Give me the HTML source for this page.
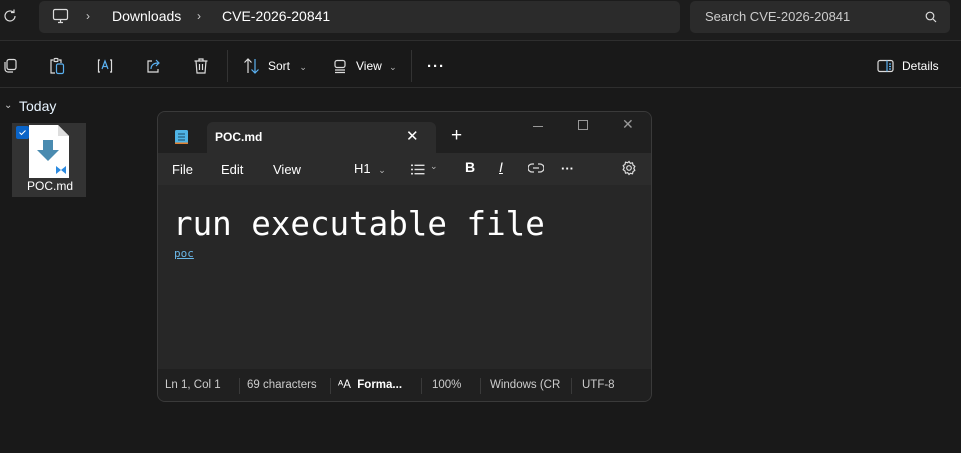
<!DOCTYPE html>
<html><head><style>
*{margin:0;padding:0;box-sizing:border-box}
body{width:961px;height:453px;background:#191919;font-family:"Segoe UI","Liberation Sans",sans-serif;color:#fff;position:relative;overflow:hidden;font-size:13px}
.a{position:absolute}
svg{position:absolute}
</style></head><body>
<div class="a" style="left:0;top:0;width:961px;height:41px;background:#1c1c1c;border-bottom:1px solid #2e2e2e"></div>
<svg style="left:2px;top:8px" width="16" height="16" viewBox="0 0 16 16" fill="none" stroke="#ddd" stroke-width="1.2"><path d="M13 8a5 5 0 1 1-1.6-3.7M12 1.5v3h-3"/></svg>
<div class="a" style="left:39px;top:1px;width:641px;height:32px;background:#2b2b2b;border-radius:5px"></div>
<svg style="left:52px;top:8px" width="17" height="16" viewBox="0 0 17 16" fill="none" stroke="#ddd" stroke-width="1.2"><rect x="1.5" y="1.5" width="14" height="10" rx="1.5"/><path d="M6 14.5h5M8.5 11.5v3"/></svg>
<div class="a" style="left:86px;top:9px;color:#ccc;font-size:12px">›</div>
<div class="a" style="left:112px;top:8px;font-size:14px">Downloads</div>
<div class="a" style="left:197px;top:9px;color:#ccc;font-size:12px">›</div>
<div class="a" style="left:222px;top:8px;font-size:14px">CVE-2026-20841</div>
<div class="a" style="left:690px;top:1px;width:260px;height:32px;background:#2b2b2b;border-radius:5px"></div>
<div class="a" style="left:705px;top:9px;color:#ccc;font-size:13px">Search CVE-2026-20841</div>
<svg style="left:925px;top:11px" width="12" height="12" viewBox="0 0 12 12" fill="none" stroke="#ddd" stroke-width="1.2"><circle cx="5" cy="5" r="3.8"/><path d="M8 8l3 3"/></svg>

<div class="a" style="left:0;top:42px;width:961px;height:46px;background:#191919;border-bottom:1px solid #2e2e2e"></div>
<svg style="left:2px;top:58px" width="16" height="16" viewBox="0 0 16 16" fill="none" stroke="#ddd" stroke-width="1.2"><rect x="5" y="1.5" width="9" height="10" rx="2"/><path d="M3 4v7a3 3 0 0 0 3 3h5"/></svg>
<svg style="left:48px;top:57px" width="17" height="18" viewBox="0 0 17 18" fill="none" stroke="#ddd" stroke-width="1.2"><path d="M5 3H3v13h4"/><rect x="6" y="1.5" width="4" height="3" rx="1"/><path d="M11 3h2v3"/><rect x="8.5" y="7" width="7" height="9.5" rx="1.5" stroke="#5ab0f0"/></svg>
<svg style="left:96px;top:58px" width="18" height="16" viewBox="0 0 18 16" fill="none" stroke="#ddd" stroke-width="1.2"><path d="M4 2H2.5v12H4M14 2h1.5v12H14"/><path d="M6 11l3-8 3 8M7 8.5h4" stroke="#5ab0f0"/></svg>
<svg style="left:145px;top:58px" width="17" height="16" viewBox="0 0 17 16" fill="none" stroke="#ddd" stroke-width="1.2"><path d="M7 3H3v11h10v-3"/><path d="M6 11c0-4 3-6 7-6M11 2l3 3-3 3" stroke="#5ab0f0"/></svg>
<svg style="left:193px;top:57px" width="16" height="18" viewBox="0 0 16 18" fill="none" stroke="#ddd" stroke-width="1.2"><path d="M1.5 4h13M6 4V2h4v2M3 4l1 12h8l1-12M6.5 7v6M9.5 7v6"/></svg>
<div class="a" style="left:227px;top:50px;width:1px;height:32px;background:#333"></div>
<svg style="left:243px;top:58px" width="17" height="16" viewBox="0 0 17 16" fill="none" stroke-width="1.2"><path d="M5 15V1M1.5 4.5L5 1l3.5 3.5" stroke="#ddd"/><path d="M12 1v14M8.5 11.5L12 15l3.5-3.5" stroke="#5ab0f0"/></svg>
<div class="a" style="left:268px;top:59px;font-size:12px">Sort <span style="color:#bbb;font-size:9px;margin-left:6px">⌄</span></div>
<svg style="left:333px;top:59px" width="14" height="15" viewBox="0 0 14 15" fill="none" stroke="#ddd" stroke-width="1.2"><rect x="2" y="1.5" width="10" height="7" rx="2"/><path d="M2 11h10M2 13.5h10"/></svg>
<div class="a" style="left:356px;top:59px;font-size:12px">View <span style="color:#bbb;font-size:9px;margin-left:4px">⌄</span></div>
<div class="a" style="left:411px;top:50px;width:1px;height:32px;background:#333"></div>
<div class="a" style="left:427px;top:58px;font-size:15px;font-weight:bold;letter-spacing:1px">···</div>
<svg style="left:877px;top:59px" width="17" height="14" viewBox="0 0 17 14" fill="none" stroke-width="1.2"><rect x="1" y="1.5" width="15" height="11" rx="2" stroke="#ddd"/><path d="M10 1.5v11M12 5h2M12 7.5h2M12 10h2" stroke="#5ab0f0"/></svg>
<div class="a" style="left:902px;top:59px;font-size:12px">Details</div>

<div class="a" style="left:4px;top:100px;color:#ccc;font-size:10px">⌄</div>
<div class="a" style="left:19px;top:98px;font-size:14px;color:#e8f4ff">Today</div>
<div class="a" style="left:12px;top:123px;width:74px;height:74px;background:#333"></div>
<div class="a" style="left:16px;top:126px;width:13px;height:13px;background:#0a64c8;border-radius:2px"></div>
<svg style="left:17px;top:127px" width="11" height="11" viewBox="0 0 11 11" fill="none" stroke="#fff" stroke-width="1"><path d="M2.5 5.5l2 2 4-4"/></svg>
<svg style="left:29px;top:125px" width="40" height="53" viewBox="0 0 40 53"><path d="M0 0h29l11 11v42H0z" fill="#fff"/><path d="M29 0v11h11z" fill="#ddd"/><path d="M14 15h10v10h6L19 36 8 25h6z" fill="#4a8bb0"/><path d="M27 41l5 4 5-4v8l-5-4-5 4z" fill="#2b8ae0"/></svg>
<div class="a" style="left:27px;top:179px;font-size:12px">POC.md</div>

<div class="a" style="left:157px;top:111px;width:495px;height:291px;background:#272727;border:1px solid #3a3a3a;border-radius:8px;overflow:hidden">
 <div class="a" style="left:0;top:0;width:495px;height:41px;background:#202020"></div>
 <div class="a" style="left:49px;top:10px;width:229px;height:32px;background:#2c2c2c;border-radius:6px 6px 0 0"></div>
 <svg style="left:17px;top:17px" width="13" height="15" viewBox="0 0 13 15"><rect x="0" y="1" width="13" height="14" rx="1.5" fill="#4fb4e6"/><path d="M3 5h7M3 8h7M3 11h7" stroke="#1b4a66" stroke-width="1"/><rect x="0" y="13.5" width="13" height="1.5" fill="#e08030"/></svg>
 <div class="a" style="left:57px;top:18px;font-size:12px;font-weight:bold">POC.md</div>
 <div class="a" style="left:248px;top:15px;font-size:15px">✕</div>
 <div class="a" style="left:293px;top:13px;font-size:19px;font-weight:300">+</div>
 <div class="a" style="left:375px;top:14px;width:10px;height:1px;background:#999"></div>
 <div class="a" style="left:420px;top:8px;width:10px;height:10px;border:1px solid #999"></div>
 <div class="a" style="left:464px;top:4px;font-size:14px;color:#999">✕</div>
 <div class="a" style="left:0;top:41px;width:495px;height:32px;background:#2c2c2c"></div>
 <div class="a" style="left:14px;top:50px;font-size:13px">File</div>
 <div class="a" style="left:63px;top:50px;font-size:13px">Edit</div>
 <div class="a" style="left:115px;top:50px;font-size:13px">View</div>
 <div class="a" style="left:196px;top:49px;font-size:13px">H1 <span style="font-size:9px;color:#bbb;margin-left:4px">⌄</span></div>
 <svg style="left:253px;top:52px" width="14" height="11" viewBox="0 0 14 11" fill="#ddd"><rect x="0" y="0.5" width="2" height="1.6"/><rect x="3.5" y="0.6" width="10" height="1.4"/><rect x="0" y="4.7" width="2" height="1.6"/><rect x="3.5" y="4.8" width="10" height="1.4"/><rect x="0" y="8.9" width="2" height="1.6"/><rect x="3.5" y="9" width="10" height="1.4"/></svg>
 <div class="a" style="left:272px;top:49px;font-size:9px;color:#bbb">⌄</div>
 <div class="a" style="left:307px;top:47px;font-size:14px;font-weight:bold">B</div>
 <div class="a" style="left:341px;top:47px;font-size:14px;font-style:italic;text-decoration:underline">I</div>
 <svg style="left:370px;top:51px" width="16" height="10" viewBox="0 0 16 10" fill="none" stroke="#ddd" stroke-width="1.3"><path d="M6 1H4a4 4 0 0 0 0 8h2M10 1h2a4 4 0 0 1 0 8h-2M5 5h6"/></svg>
 <div class="a" style="left:403px;top:49px;font-size:13px;font-weight:bold">···</div>
 <svg style="left:463px;top:48px" width="16" height="16" viewBox="0 0 16 16" fill="none" stroke="#ddd" stroke-width="1.2"><circle cx="8" cy="8" r="2.3"/><path d="M8 1.5l1.3 1.8 2.2-.5.5 2.2 1.8 1.3-1 2 1 2-1.8 1.3-.5 2.2-2.2-.5L8 14.5l-1.3-1.8-2.2.5-.5-2.2L2.2 9.7l1-2-1-2 1.8-1.3.5-2.2 2.2.5z"/></svg>
 <div class="a" style="left:15px;top:88px;font-family:'DejaVu Sans Mono','Liberation Mono',monospace;font-size:32.5px;line-height:48px;color:#fff">run executable file</div>
 <div class="a" style="left:16px;top:135px;font-family:'DejaVu Sans Mono','Liberation Mono',monospace;font-size:11px;color:#6ab8e8;text-decoration:underline">poc</div>
 <div class="a" style="left:0;top:257px;width:495px;height:34px;background:#202020"></div>
 <div class="a" style="left:0;top:267px;width:495px;font-size:11.5px;color:#ccc;white-space:nowrap">
  <span class="a" style="left:7px">Ln 1, Col 1</span>
  <span class="a" style="left:81px;width:1px;height:16px;top:-1px;background:#3a3a3a"></span>
  <span class="a" style="left:89px">69 characters</span>
  <span class="a" style="left:172px;width:1px;height:16px;top:-1px;background:#3a3a3a"></span>
  <span class="a" style="left:180px;color:#fff">ᴬA&nbsp; <b>Forma...</b></span>
  <span class="a" style="left:263px;width:1px;height:16px;top:-1px;background:#3a3a3a"></span>
  <span class="a" style="left:274px">100%</span>
  <span class="a" style="left:322px;width:1px;height:16px;top:-1px;background:#3a3a3a"></span>
  <span class="a" style="left:332px">Windows (CR</span>
  <span class="a" style="left:413px;width:1px;height:16px;top:-1px;background:#3a3a3a"></span>
  <span class="a" style="left:424px">UTF-8</span>
 </div>
</div>
</body></html>
